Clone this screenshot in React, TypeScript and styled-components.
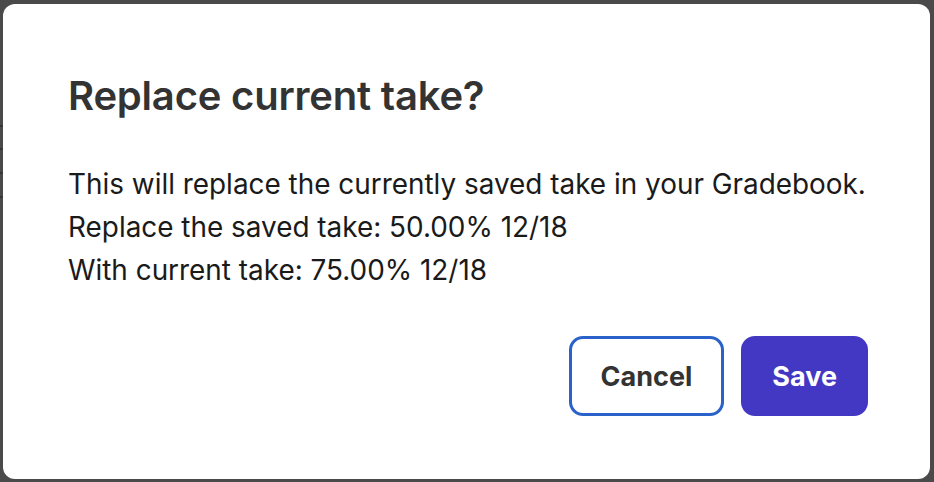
import React from 'react';
import styled, { createGlobalStyle } from 'styled-components';

const GlobalStyle = createGlobalStyle`
  html, body {
    margin: 0;
    height: 100%;
  }
  body {
    background: #4a4a4a;
    font-family: Inter, "Noto Sans", sans-serif;
    -webkit-font-smoothing: antialiased;
  }
  #root {
    height: 100%;
  }
`;

const Backdrop = styled.div`
  box-sizing: border-box;
  height: 100%;
  padding: 4px 4px 3px 3px;
  display: flex;
  background:
    linear-gradient(#363636, #363636) 0 125px / 3px 2px no-repeat,
    linear-gradient(#363636, #363636) 0 148px / 3px 2px no-repeat,
    linear-gradient(#363636, #363636) 0 172px / 3px 2px no-repeat,
    linear-gradient(#363636, #363636) 0 196px / 3px 2px no-repeat,
    #4a4a4a;
`;

const Dialog = styled.div`
  box-sizing: border-box;
  flex: 1;
  background: #ffffff;
  border-radius: 12px;
  padding: 68px 62px 63px 65px;
  display: flex;
  flex-direction: column;
`;

const Title = styled.h2`
  margin: 0;
  font-size: 40px;
  line-height: 48px;
  font-weight: 600;
  color: #333333;
  letter-spacing: -0.2px;
`;

const Body = styled.div`
  margin-top: 43px;
  font-size: 27.9px;
  line-height: 43px;
  color: #1a1a1a;
  white-space: nowrap;
`;

const Line = styled.p`
  margin: 0;
`;

const Actions = styled.div`
  margin-top: auto;
  display: flex;
  justify-content: flex-end;
  gap: 17px;
`;

const Button = styled.button<{ $primary?: boolean }>`
  box-sizing: border-box;
  height: 80px;
  padding: 0 ${(p) => (p.$primary ? '28px' : '29px')};
  border-radius: 14px;
  font-family: inherit;
  font-size: 27px;
  font-weight: 700;
  cursor: pointer;
  border: 3px solid ${(p) => (p.$primary ? '#4238c3' : '#2a62c9')};
  background: ${(p) => (p.$primary ? '#4238c3' : '#ffffff')};
  color: ${(p) => (p.$primary ? '#ffffff' : '#333333')};
`;

export default function App() {
  return (
    <>
      <GlobalStyle />
      <Backdrop>
        <Dialog role="dialog">
          <Title>Replace current take?</Title>
          <Body>
            <Line>This will replace the currently saved take in your Gradebook.</Line>
            <Line>Replace the saved take: 50.00% 12/18</Line>
            <Line>With current take: 75.00% 12/18</Line>
          </Body>
          <Actions>
            <Button>Cancel</Button>
            <Button $primary>Save</Button>
          </Actions>
        </Dialog>
      </Backdrop>
    </>
  );
}
